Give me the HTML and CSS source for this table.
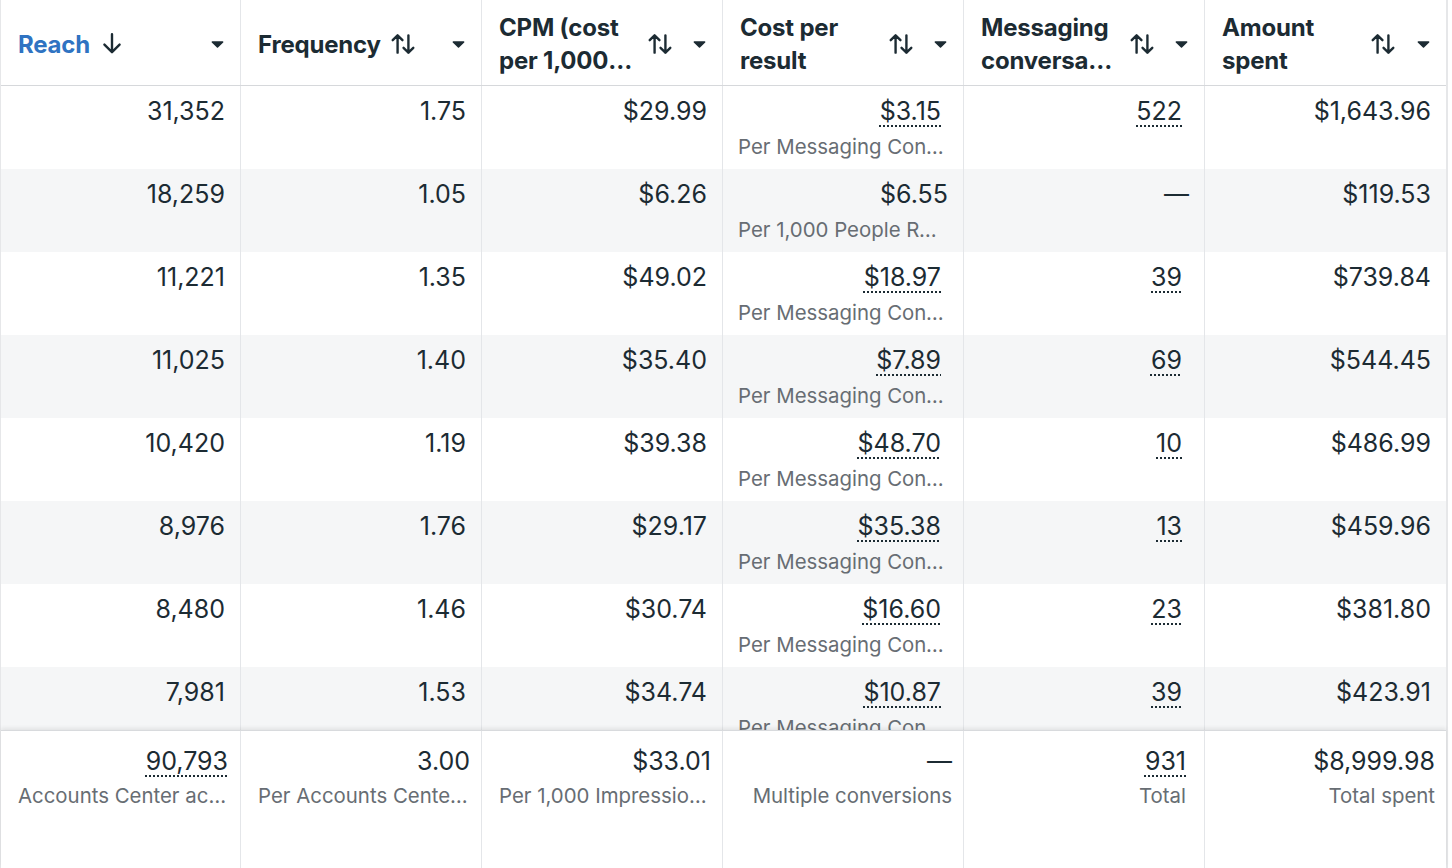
FILE: index.html
```html
<!DOCTYPE html>
<html lang="en">
<head>
<meta charset="utf-8">
<title>Ads report</title>
<link rel="stylesheet" href="styles.css">
</head>
<body>
<div class="table">
  <div class="row head">
    <div class="hcell">
      <span class="label active">Reach</span>
      <svg class="sort" viewBox="0 0 24 24"><path d="M12 3v16M5 12.5l7 7 7-7"/></svg>
      <span class="spacer"></span>
      <svg class="caret" viewBox="0 0 12 8"><path d="M1.2 1h9.6c.6 0 .9.7.5 1.1L6.5 6.7c-.3.3-.7.3-1 0L.7 2.1C.3 1.7.6 1 1.2 1z"/></svg>
    </div>
    <div class="hcell">
      <span class="label">Frequency</span>
      <svg class="sort" viewBox="0 0 24 24"><path d="M7 20V4M2.5 8.5L7 4l4.5 4.5M17 4v16M12.5 15.5L17 20l4.5-4.5"/></svg>
      <span class="spacer"></span>
      <svg class="caret" viewBox="0 0 12 8"><path d="M1.2 1h9.6c.6 0 .9.7.5 1.1L6.5 6.7c-.3.3-.7.3-1 0L.7 2.1C.3 1.7.6 1 1.2 1z"/></svg>
    </div>
    <div class="hcell">
      <span class="label">CPM (cost per 1,000 Accounts Center accounts reached)</span>
      <svg class="sort" viewBox="0 0 24 24"><path d="M7 20V4M2.5 8.5L7 4l4.5 4.5M17 4v16M12.5 15.5L17 20l4.5-4.5"/></svg>
      <span class="spacer"></span>
      <svg class="caret" viewBox="0 0 12 8"><path d="M1.2 1h9.6c.6 0 .9.7.5 1.1L6.5 6.7c-.3.3-.7.3-1 0L.7 2.1C.3 1.7.6 1 1.2 1z"/></svg>
    </div>
    <div class="hcell">
      <span class="label fixed">Cost per result</span>
      <svg class="sort" viewBox="0 0 24 24"><path d="M7 20V4M2.5 8.5L7 4l4.5 4.5M17 4v16M12.5 15.5L17 20l4.5-4.5"/></svg>
      <span class="spacer"></span>
      <svg class="caret" viewBox="0 0 12 8"><path d="M1.2 1h9.6c.6 0 .9.7.5 1.1L6.5 6.7c-.3.3-.7.3-1 0L.7 2.1C.3 1.7.6 1 1.2 1z"/></svg>
    </div>
    <div class="hcell">
      <span class="label">Messaging conversations started</span>
      <svg class="sort" viewBox="0 0 24 24"><path d="M7 20V4M2.5 8.5L7 4l4.5 4.5M17 4v16M12.5 15.5L17 20l4.5-4.5"/></svg>
      <span class="spacer"></span>
      <svg class="caret" viewBox="0 0 12 8"><path d="M1.2 1h9.6c.6 0 .9.7.5 1.1L6.5 6.7c-.3.3-.7.3-1 0L.7 2.1C.3 1.7.6 1 1.2 1z"/></svg>
    </div>
    <div class="hcell">
      <span class="label fixed">Amount spent</span>
      <svg class="sort" viewBox="0 0 24 24"><path d="M7 20V4M2.5 8.5L7 4l4.5 4.5M17 4v16M12.5 15.5L17 20l4.5-4.5"/></svg>
      <span class="spacer"></span>
      <svg class="caret" viewBox="0 0 12 8"><path d="M1.2 1h9.6c.6 0 .9.7.5 1.1L6.5 6.7c-.3.3-.7.3-1 0L.7 2.1C.3 1.7.6 1 1.2 1z"/></svg>
    </div>
  </div>

  <div class="body">
    <div class="row">
      <div class="cell"><span class="val">31,352</span></div>
      <div class="cell"><span class="val">1.75</span></div>
      <div class="cell"><span class="val">$29.99</span></div>
      <div class="cell"><span class="val dot">$3.15</span><span class="sub">Per Messaging Conversation Started</span></div>
      <div class="cell"><span class="val dot">522</span></div>
      <div class="cell"><span class="val">$1,643.96</span></div>
    </div>
    <div class="row alt">
      <div class="cell"><span class="val">18,259</span></div>
      <div class="cell"><span class="val">1.05</span></div>
      <div class="cell"><span class="val">$6.26</span></div>
      <div class="cell"><span class="val">$6.55</span><span class="sub">Per 1,000 People Reached</span></div>
      <div class="cell"><span class="val">—</span></div>
      <div class="cell"><span class="val">$119.53</span></div>
    </div>
    <div class="row">
      <div class="cell"><span class="val">11,221</span></div>
      <div class="cell"><span class="val">1.35</span></div>
      <div class="cell"><span class="val">$49.02</span></div>
      <div class="cell"><span class="val dot">$18.97</span><span class="sub">Per Messaging Conversation Started</span></div>
      <div class="cell"><span class="val dot">39</span></div>
      <div class="cell"><span class="val">$739.84</span></div>
    </div>
    <div class="row alt">
      <div class="cell"><span class="val">11,025</span></div>
      <div class="cell"><span class="val">1.40</span></div>
      <div class="cell"><span class="val">$35.40</span></div>
      <div class="cell"><span class="val dot">$7.89</span><span class="sub">Per Messaging Conversation Started</span></div>
      <div class="cell"><span class="val dot">69</span></div>
      <div class="cell"><span class="val">$544.45</span></div>
    </div>
    <div class="row">
      <div class="cell"><span class="val">10,420</span></div>
      <div class="cell"><span class="val">1.19</span></div>
      <div class="cell"><span class="val">$39.38</span></div>
      <div class="cell"><span class="val dot">$48.70</span><span class="sub">Per Messaging Conversation Started</span></div>
      <div class="cell"><span class="val dot">10</span></div>
      <div class="cell"><span class="val">$486.99</span></div>
    </div>
    <div class="row alt">
      <div class="cell"><span class="val">8,976</span></div>
      <div class="cell"><span class="val">1.76</span></div>
      <div class="cell"><span class="val">$29.17</span></div>
      <div class="cell"><span class="val dot">$35.38</span><span class="sub">Per Messaging Conversation Started</span></div>
      <div class="cell"><span class="val dot">13</span></div>
      <div class="cell"><span class="val">$459.96</span></div>
    </div>
    <div class="row">
      <div class="cell"><span class="val">8,480</span></div>
      <div class="cell"><span class="val">1.46</span></div>
      <div class="cell"><span class="val">$30.74</span></div>
      <div class="cell"><span class="val dot">$16.60</span><span class="sub">Per Messaging Conversation Started</span></div>
      <div class="cell"><span class="val dot">23</span></div>
      <div class="cell"><span class="val">$381.80</span></div>
    </div>
    <div class="row alt">
      <div class="cell"><span class="val">7,981</span></div>
      <div class="cell"><span class="val">1.53</span></div>
      <div class="cell"><span class="val">$34.74</span></div>
      <div class="cell"><span class="val dot">$10.87</span><span class="sub">Per Messaging Conversation Started</span></div>
      <div class="cell"><span class="val dot">39</span></div>
      <div class="cell"><span class="val">$423.91</span></div>
    </div>
  </div>

  <div class="row foot">
    <div class="fcell"><span class="val dot">90,793</span><span class="sub">Accounts Center accounts reached</span></div>
    <div class="fcell"><span class="val">3.00</span><span class="sub">Per Accounts Center account</span></div>
    <div class="fcell"><span class="val">$33.01</span><span class="sub">Per 1,000 Impressions</span></div>
    <div class="fcell"><span class="val">—</span><span class="sub">Multiple conversions</span></div>
    <div class="fcell inset"><span class="val dot">931</span><span class="sub">Total</span></div>
    <div class="fcell"><span class="val">$8,999.98</span><span class="sub">Total spent</span></div>
  </div>
</div>
</body>
</html>
```

FILE: styles.css
```css
* { box-sizing: border-box; }
html, body {
  margin: 0;
  padding: 0;
  background: #ffffff;
}
body {
  font-family: Inter, "Noto Sans", Roboto, sans-serif;
  color: #1c2b33;
  width: 1452px;
  height: 868px;
  overflow: hidden;
}
.table {
  width: 1448px;
  height: 868px;
  display: flex;
  flex-direction: column;
  border-left: 1px solid #e6e7e9;
  border-right: 2px solid #e6e7e9;
}
.row {
  display: grid;
  grid-template-columns: 240px 241px 241px 241px 241px 241px;
}
.head {
  height: 86px;
  border-bottom: 1px solid #d6d8db;
  flex: none;
}
.hcell {
  display: flex;
  align-items: center;
  padding: 3px 16px 0 17px;
  border-right: 1px solid #e4e6e9;
}
.hcell:last-child { border-right: none; }
.label {
  font-size: 24px;
  font-weight: 700;
  line-height: 33px;
  max-width: 139px;
  flex: 0 1 auto;
  overflow: hidden;
  display: -webkit-box;
  -webkit-line-clamp: 2;
  -webkit-box-orient: vertical;
  letter-spacing: -0.2px;
}
.label.fixed { width: 139px; }
.label.active { color: #2f73c2; }
.sort {
  width: 26px;
  height: 26px;
  margin-left: 9px;
  flex: none;
  fill: none;
  stroke: #1c2b33;
  stroke-width: 2.2;
  stroke-linecap: round;
  stroke-linejoin: round;
}
.spacer { flex: 1; }
.caret {
  width: 13px;
  height: 9px;
  fill: #1c2b33;
  flex: none;
}
.body {
  height: 644px;
  overflow: hidden;
  flex: none;
}
.body .row { height: 83px; }
.body .row.alt { background: #f5f6f7; }
.cell {
  display: flex;
  flex-direction: column;
  align-items: flex-end;
  padding: 9px 15px 0 15px;
  border-right: 1px solid #e4e6e9;
  min-width: 0;
}
.cell:last-child { border-right: none; }
.val {
  font-size: 25px;
  line-height: 32px;
  white-space: nowrap;
}
.val.dot {
  text-decoration: underline dotted #1c2b33;
  text-decoration-thickness: 2px;
  text-underline-offset: 5px;
  margin-right: 7px;
}
.sub {
  font-size: 20.4px;
  line-height: 28px;
  margin-top: 6px;
  color: #676d73;
  white-space: nowrap;
  overflow: hidden;
  text-overflow: ellipsis;
  max-width: 100%;
  display: block;
}
.foot {
  flex: 1;
  border-top: 1px solid #d8dadd;
  box-shadow: 0 -2px 4px rgba(0, 0, 0, 0.08);
  position: relative;
  background: #ffffff;
}
.fcell {
  display: flex;
  flex-direction: column;
  align-items: flex-end;
  padding: 14px 11px 0 17px;
  border-right: 1px solid #e4e6e9;
  min-width: 0;
}
.fcell:last-child { border-right: none; }
.fcell .val.dot { margin-right: 1px; }
.fcell.inset { padding-right: 18px; }
.fcell.inset .val.dot { margin-right: 0; }
.fcell .sub { margin-top: 5px; }
```
